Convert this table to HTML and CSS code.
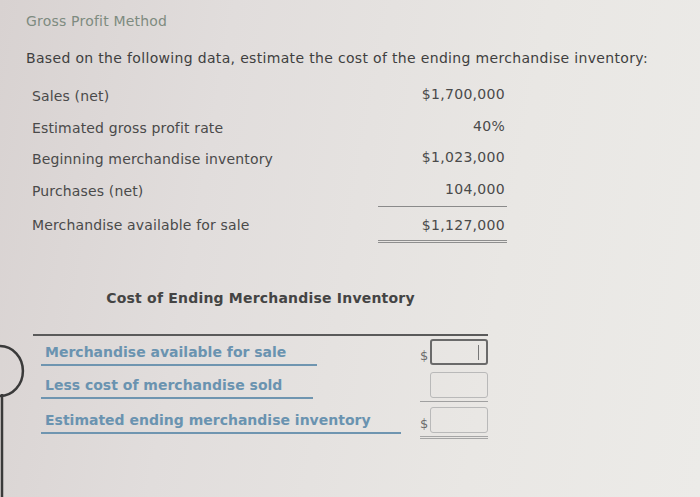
FILE: index.html
```html
<!DOCTYPE html>
<html>
<head>
<meta charset="utf-8">
<link rel="stylesheet" href="styles.css">
</head>
<body>
<div class="page">
  <h1 class="title">Gross Profit Method</h1>
  <p class="intro">Based on the following data, estimate the cost of the ending merchandise inventory:</p>
  <div class="data">
    <div class="row"><span class="label">Sales (net)</span><span class="val">$1,700,000</span></div>
    <div class="row"><span class="label">Estimated gross profit rate</span><span class="val">40%</span></div>
    <div class="row"><span class="label">Beginning merchandise inventory</span><span class="val">$1,023,000</span></div>
    <div class="row tall"><span class="label">Purchases (net)</span><span class="val single">104,000</span></div>
    <div class="row last"><span class="label">Merchandise available for sale</span><span class="val double">$1,127,000</span></div>
  </div>

  <div class="section">
    <h2 class="heading">Cost of Ending Merchandise Inventory</h2>
    <div class="sheet">
      <div class="line">
        <span class="pick w1">Merchandise available for sale</span>
        <span class="cell"><span class="cur">$</span><span class="box focus"><span class="caret"></span></span></span>
      </div>
      <div class="line">
        <span class="pick w2">Less cost of merchandise sold</span>
        <span class="cell single2"><span class="cur"></span><span class="box"></span></span>
      </div>
      <div class="line">
        <span class="pick w3">Estimated ending merchandise inventory</span>
        <span class="cell double2"><span class="cur">$</span><span class="box"></span></span>
      </div>
    </div>
  </div>
</div>
<svg class="knob" width="30" height="160" viewBox="0 0 30 160">
  <path d="M0 6 A22 24 0 0 1 0 56" fill="none" stroke="#3a3a3a" stroke-width="2.5"/>
  <line x1="2" y1="54" x2="2" y2="160" stroke="#3a3a3a" stroke-width="2.5"/>
</svg>
</body>
</html>
```
FILE: styles.css
```css
html, body {
  margin: 0;
  height: 100%;
}
body {
  background: linear-gradient(100deg, #d8d2d1 0%, #e1dddc 30%, #e9e7e4 70%, #ecebe8 100%);
  font-family: "DejaVu Sans", Verdana, sans-serif;
  font-size: 14px;
  color: #4a4a4a;
  overflow: hidden;
  position: relative;
}
.page {
  padding: 13px 0 0 26px;
}
.title {
  font-size: 14px;
  font-weight: normal;
  color: #7e8b80;
  margin: 0;
  letter-spacing: 0.2px;
}
.intro {
  margin: 21px 0 0;
  color: #3f3f3f;
  letter-spacing: 0.33px;
}
.data {
  margin: 20px 0 0 6px;
  width: 475px;
}
.row {
  display: grid;
  grid-template-columns: 346px 129px;
  height: 31.5px;
  align-items: start;
}
.row.tall {
  height: 34.5px;
}
.row.last {
  height: 36px;
}
.label {
  letter-spacing: 0.15px;
  padding-top: 2px;
}
.val {
  text-align: right;
  padding-right: 2px;
  letter-spacing: 0.3px;
  height: 22px;
}
.val.single {
  height: 25px;
  border-bottom: 1px solid #8a8a8a;
}
.val.double {
  padding-top: 2px;
  height: 23px;
  border-bottom: 3px double #8e8e8e;
}
.section {
  margin: 39px 0 0 7px;
  width: 455px;
}
.heading {
  margin: 0;
  text-align: center;
  font-size: 14px;
  font-weight: bold;
  color: #444;
  letter-spacing: 0.2px;
}
.sheet {
  margin-top: 28px;
  border-top: 2px solid #5a5a5a;
  padding-top: 3px;
}
.line {
  display: flex;
  justify-content: space-between;
  align-items: flex-start;
  height: 33px;
}
.line:nth-child(2) { height: 35px; }
.pick {
  margin-left: 8px;
  font-weight: bold;
  color: #6a93b0;
  padding: 5px 0 0 4px;
  height: 20px;
  border-bottom: 2px solid #6f95b0;
  letter-spacing: 0;
}
.w1 { width: 272px; }
.w2 { width: 268px; }
.w3 { width: 356px; }
.cell {
  display: flex;
  align-items: flex-end;
  width: 68px;
}
.cur {
  width: 10px;
  font-size: 13px;
  color: #6c6c6c;
  line-height: 18px;
}
.box {
  width: 56px;
  height: 24px;
  border: 1px solid #b9b9b9;
  border-radius: 3px;
  position: relative;
}
.box.focus {
  border: 2px solid #6a6a6a;
  width: 54px;
  height: 22px;
}
.caret {
  position: absolute;
  right: 7px;
  top: 4px;
  width: 1px;
  height: 15px;
  background: #777;
}
.single2 {
  border-bottom: 1px solid #a0a0a0;
  padding-bottom: 3px;
}
.double2 {
  border-bottom: 3px double #a5a5a5;
  padding-bottom: 3px;
}
.knob {
  position: absolute;
  left: 0;
  top: 340px;
}
```
